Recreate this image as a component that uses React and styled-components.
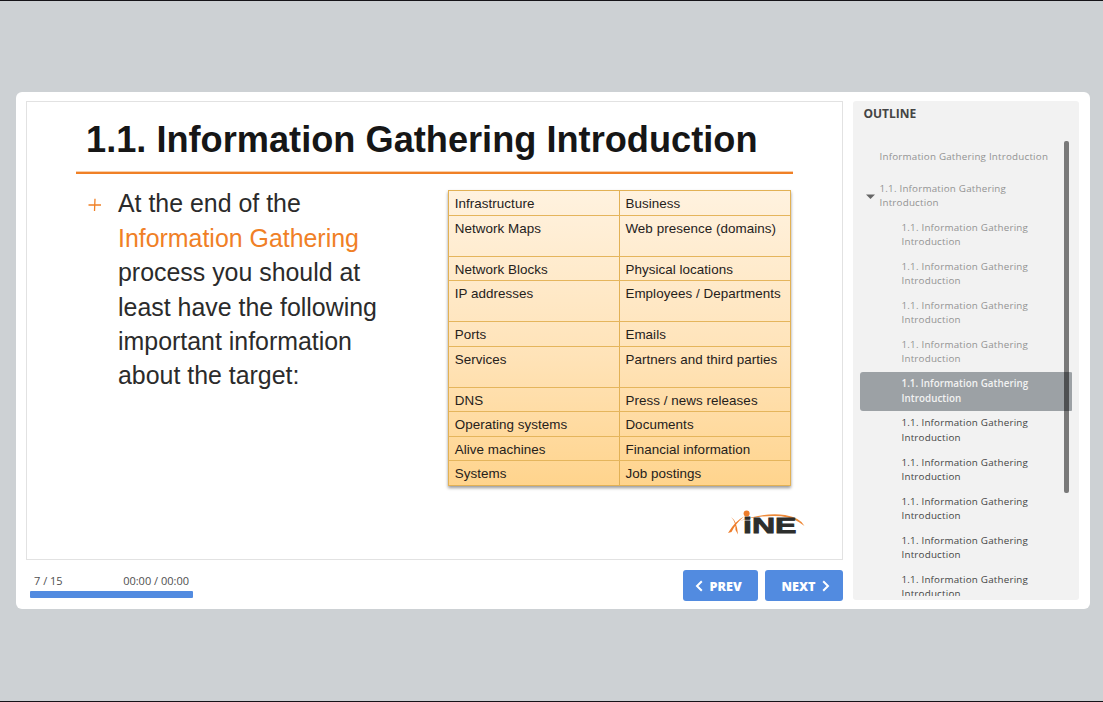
import React from "react";
import styled, { createGlobalStyle } from "styled-components";

const GlobalStyle = createGlobalStyle`
  * { box-sizing: border-box; }
  body { margin: 0; background: #cdd1d4; }
`;

const Stage = styled.main`
  width: 1103px;
  height: 702px;
  padding: 91px 13px 0 16px;
  background: #cdd1d4;
  border-top: 1px solid #151318;
  border-bottom: 1px solid #151318;
  overflow: hidden;
  font-family: "Open Sans", sans-serif;
`;

const Player = styled.div`
  display: flex;
  gap: 10px;
  height: 517px;
  padding: 9px 11px 8px 10px;
  background: #fff;
  border-radius: 6px;
`;

const Content = styled.div`
  width: 817px;
  flex: none;
`;

const Slide = styled.article`
  height: 459px;
  border: 1px solid #e2e2e2;
  padding: 16px 36px 0 49px;
  font-family: "Liberation Sans", Arial, sans-serif;
`;

const Title = styled.h1`
  width: 717px;
  height: 56px;
  margin: 0;
  padding-left: 10px;
  border-bottom: 2px solid #f08026;
  box-shadow: inset 0 -1px 0 #f9cfaa;
  color: #161616;
  font-size: 36.2px;
  font-weight: 700;
  line-height: 44px;
  white-space: nowrap;
`;

const SlideBody = styled.div`
  display: flex;
  height: 331px;
`;

const Bullet = styled.svg`
  flex: none;
  width: 14px;
  height: 14px;
  margin: 23.5px 16px 0 12px;
`;

const Statement = styled.p`
  width: 330px;
  margin: 12.4px 0 0;
  color: #2b2b2b;
  font-size: 24.92px;
  line-height: 34.4px;
  white-space: pre-line;
`;

const Highlight = styled.span`
  color: #f08026;
`;

const Table = styled.div`
  width: 343px;
  height: 296px;
  margin: 16px 0 0 0;
  padding-top: 0.3px;
  border: 1px solid #e2b155;
  background: linear-gradient(#fff2df, #ffe3b8 56%, #ffd48d);
  box-shadow: 0 2px 3px rgba(0, 0, 0, 0.4);
`;

const TableRow = styled.div`
  display: flex;
  height: ${(p) => (p.$tall ? "40.9px" : "24.58px")};
  border-bottom: 1px solid #e5b55c;
  &:last-child { border-bottom: 0; }
`;

const Cell = styled.div`
  width: 170px;
  padding: 5px 0 0 5.7px;
  color: #25211b;
  font-size: 13.4px;
  letter-spacing: 0.06px;
  line-height: 16px;
  white-space: nowrap;
  & + & { width: 171px; padding-left: 5.4px; border-left: 1px solid #e2b155; }
`;

const Logo = styled.svg`
  display: block;
  width: 80px;
  height: 28px;
  margin: 2px 0 0 651px;
  overflow: visible;
`;

const Controls = styled.div`
  display: flex;
  align-items: flex-start;
  padding: 10px 0 0 4px;
  height: 41px;
`;

const Progress = styled.div`
  width: 163px;
  margin-right: auto;
`;

const ProgressText = styled.div`
  display: flex;
  justify-content: space-between;
  height: 21px;
  padding: 2px 4px 0 4px;
  color: #4f4f4f;
  font-size: 11px;
  line-height: 17px;
`;

const ProgressBar = styled.div`
  height: 7px;
  border-radius: 1px;
  background: #528be0;
`;

const NavButton = styled.button`
  display: flex;
  align-items: center;
  justify-content: ${(p) => (p.$next ? "flex-end" : "flex-start")};
  gap: ${(p) => (p.$next ? "6.5px" : "6.5px")};
  width: ${(p) => (p.$next ? "78px" : "75px")};
  height: 31px;
  margin-left: ${(p) => (p.$next ? "7px" : "0")};
  padding: ${(p) => (p.$next ? "3px 13px 0 0" : "3px 0 0 12px")};
  border: 0;
  border-radius: 3px;
  background: #528be0;
  color: #fff;
  font: 800 12.6px/16px "Open Sans", sans-serif;
  svg { width: 8px; height: 12px; margin-top: -3px; }
`;

const Sidebar = styled.aside`
  position: relative;
  width: 226px;
  height: 499px;
  padding: 4px 7px 0;
  border-radius: 3px;
  background: #f2f2f2;
`;

const SidebarTitle = styled.h2`
  margin: 0;
  padding-left: 3.4px;
  height: 36px;
  color: #444;
  font-size: 12px;
  font-weight: 700;
  line-height: 17px;
`;

const OutlineList = styled.div`
  height: 455px;
  overflow: hidden;
`;

const OutlineItem = styled.div`
  display: flex;
  align-items: center;
  width: 212.5px;
  height: ${(p) => (p.$first ? "31.5px" : p.$group ? "38.7px" : "39.14px")};
  margin-top: ${(p) => (p.$group ? "4.3px" : "0")};
  padding-left: ${(p) => (p.$first ? "19.5px" : p.$group ? "6px" : "41.5px")};
  gap: 4.5px;
  border-radius: 3px;
  background: ${(p) => (p.$current ? "#9ca1a5" : "transparent")};
  color: ${(p) => (p.$current ? "#f2f2f2" : p.$visited ? "#929292" : "#444")};
  font-size: 9.8px;
  font-weight: ${(p) => (p.$current ? 600 : 400)};
  letter-spacing: ${(p) => (p.$current ? "0.04px" : "0.21px")};
  line-height: 14.2px;
  white-space: pre-line;
  svg { width: 9px; height: 5px; flex: none; margin-top: 0; }
`;

const Scrollbar = styled.div`
  position: absolute;
  top: 40px;
  left: 211.3px;
  width: 4.7px;
  height: 352px;
  border-radius: 2px;
  background: rgba(0, 0, 0, 0.5);
`;

const rows = [
  ["Infrastructure", "Business"],
  ["Network Maps", "Web presence (domains)", true],
  ["Network Blocks", "Physical locations"],
  ["IP addresses", "Employees / Departments", true],
  ["Ports", "Emails"],
  ["Services", "Partners and third parties", true],
  ["DNS", "Press / news releases"],
  ["Operating systems", "Documents"],
  ["Alive machines", "Financial information"],
  ["Systems", "Job postings"],
];

const label = "1.1. Information Gathering\nIntroduction";
const currentIndex = 4;

export default function App() {
  return (
    <>
      <GlobalStyle />
      <Stage>
        <Player>
          <Content>
            <Slide>
              <Title>1.1. Information Gathering Introduction</Title>
              <SlideBody>
                <Bullet viewBox="0 0 14 14">
                  <path d="M.5 7h12.5M7 .8L6.5 13" stroke="#f08026" strokeWidth="1.3" />
                </Bullet>
                <Statement>
                  {"At the end of the\n"}
                  <Highlight>Information Gathering</Highlight>
                  {"\nprocess you should at\nleast have the following\nimportant information\nabout the target:"}
                </Statement>
                <Table>
                  {rows.map(([left, right, tall]) => (
                    <TableRow key={left} $tall={tall}>
                      <Cell>{left}</Cell>
                      <Cell>{right}</Cell>
                    </TableRow>
                  ))}
                </Table>
              </SlideBody>
              <Logo viewBox="0 0 80 28">
                <path d="M12 14Q38 5 58 8Q74 11 77.500 19Q68 11 54 9.200Q32 8 12 14Z" fill="#ee8a3a" />
                <path d="M1 26Q8 14 17 9.500Q9 16 4.500 25ZM4 10Q10 14 11 27.500L8.500 23Q9 15 4 10Z" fill="#ee7d2b" />
                <text x="16" y="26" textLength="53.5" lengthAdjust="spacingAndGlyphs" fill="#2d2e2d" stroke="#2d2e2d" strokeWidth=".8" fontFamily="Liberation Sans, Arial, sans-serif" fontWeight="700" fontSize="21.5">iNE</text>
                <circle cx="19.600" cy="6.500" r="3" fill="#ee7d2b" />
              </Logo>
            </Slide>
            <Controls>
              <Progress>
                <ProgressText>
                  <span>7 / 15</span>
                  <span>00:00 / 00:00</span>
                </ProgressText>
                <ProgressBar />
              </Progress>
              <NavButton>
                <svg viewBox="0 0 8 12"><path d="M6.8 1.2L2 6l4.800 4.800" fill="none" stroke="#fff" strokeWidth="2" /></svg>
                PREV
              </NavButton>
              <NavButton $next>
                NEXT
                <svg viewBox="0 0 8 12"><path d="M1.2 1.2L6 6l-4.800 4.800" fill="none" stroke="#fff" strokeWidth="2" /></svg>
              </NavButton>
            </Controls>
          </Content>
          <Sidebar>
            <SidebarTitle>OUTLINE</SidebarTitle>
            <OutlineList>
              <OutlineItem $first $visited>Information Gathering Introduction</OutlineItem>
              <OutlineItem $group $visited>
                <svg viewBox="0 0 9 5"><path d="M0 .5h9L4.5 5z" fill="#666" /></svg>
                {label}
              </OutlineItem>
              {Array.from({ length: 10 }, (_, i) => (
                <OutlineItem key={i} $visited={i < currentIndex} $current={i === currentIndex}>
                  {label}
                </OutlineItem>
              ))}
            </OutlineList>
            <Scrollbar />
          </Sidebar>
        </Player>
      </Stage>
    </>
  );
}
